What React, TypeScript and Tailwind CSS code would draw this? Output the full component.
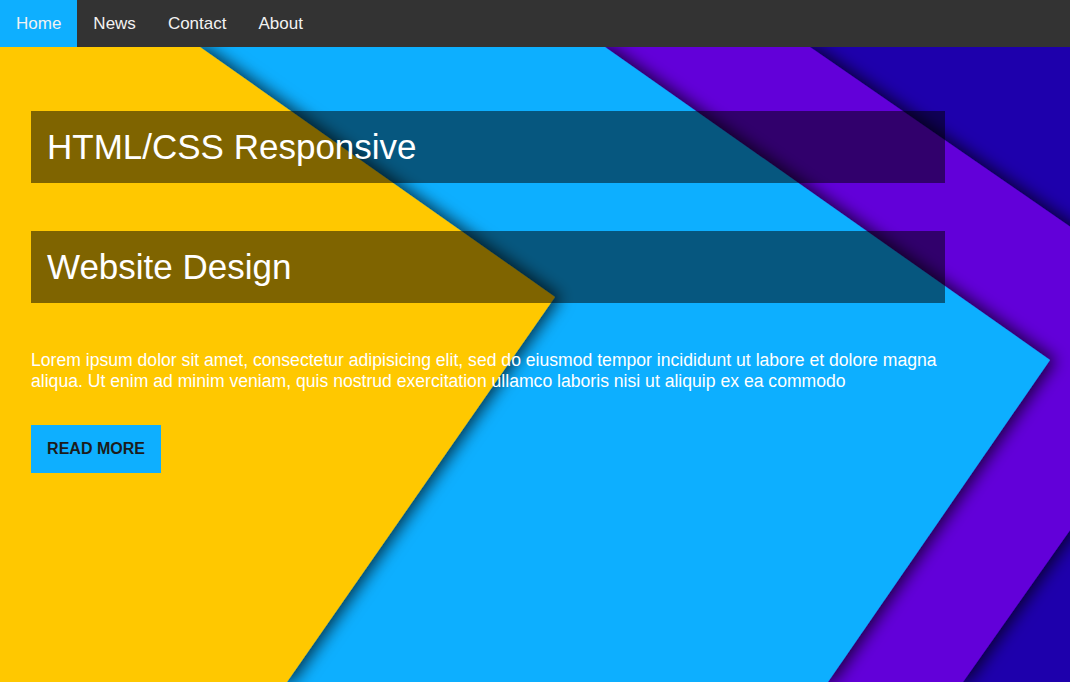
const NAV = ["Home", "News", "Contact", "About"];

function Backdrop() {
  return (
    <svg
      className="absolute inset-0 h-full w-full"
      viewBox="0 0 1070 635"
      preserveAspectRatio="xMinYMin slice"
      aria-hidden
    >
      <defs>
        <filter id="edge" x="-10%" y="-10%" width="130%" height="130%">
          <feDropShadow dx="6" dy="0" stdDeviation="8" floodColor="#000" floodOpacity="0.7" />
        </filter>
      </defs>
      <rect x="0" y="0" width="1070" height="635" fill="#1e00ac" />
      <polygon points="0,0 810,0 1214,279 963,635 0,635" fill="#6200d9" filter="url(#edge)" />
      <polygon points="0,0 605,0 1050,313 828,635 0,635" fill="#0eafff" filter="url(#edge)" />
      <polygon points="0,0 200,0 555,250 287,635 0,635" fill="#ffc800" filter="url(#edge)" />
    </svg>
  );
}

export default function App() {
  return (
    <div className="min-h-[682px] w-full font-['Liberation_Sans',Arial,sans-serif]">
      <nav className="flex h-[47px] bg-[#333333]">
        {NAV.map((item, i) => (
          <a
            key={item}
            href="#"
            className={
              i === 0
                ? "flex items-center bg-[#0eafff] px-4 text-[17px] text-[#f2f2f2]"
                : "flex items-center px-4 text-[17px] text-[#f2f2f2]"
            }
          >
            {item}
          </a>
        ))}
      </nav>

      <section className="relative h-[635px] overflow-hidden">
        <Backdrop />
        <div className="relative flex flex-col pl-[31px] pt-16">
          <h1 className="flex h-[72px] w-[914px] items-center bg-black/50 px-4 text-[35px] font-normal text-white">
            HTML/CSS Responsive
          </h1>
          <h2 className="mt-12 flex h-[72px] w-[914px] items-center bg-black/50 px-4 text-[35px] font-normal text-white">
            Website Design
          </h2>
          <p className="mt-[47px] w-[914px] text-[17.6px] leading-[21px] text-white">
            Lorem ipsum dolor sit amet, consectetur adipisicing elit, sed do eiusmod tempor
            incididunt ut labore et dolore magna aliqua. Ut enim ad minim veniam, quis nostrud
            exercitation ullamco laboris nisi ut aliquip ex ea commodo
          </p>
          <a
            href="#"
            className="mt-[33px] flex h-12 w-[130px] items-center justify-center bg-[#0eafff] text-base font-bold text-[#1c1c1c]"
          >
            READ MORE
          </a>
        </div>
      </section>
    </div>
  );
}
